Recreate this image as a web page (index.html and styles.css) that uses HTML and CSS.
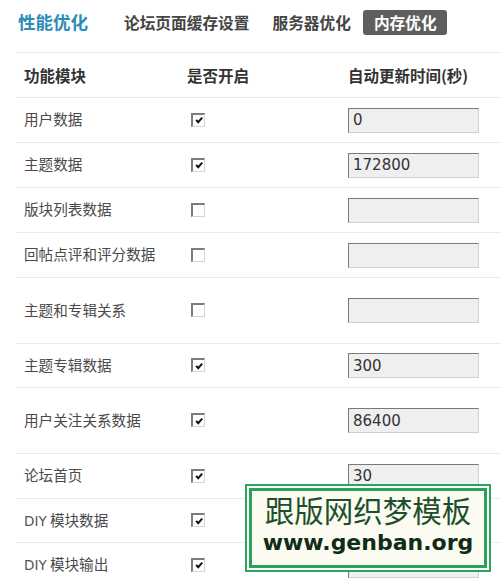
FILE: index.html
```html
<!DOCTYPE html>
<html lang="zh-CN">
<head>
<meta charset="utf-8">
<title>性能优化 - 内存优化</title>
<link rel="stylesheet" href="styles.css">
</head>
<body>
<div class="page">
  <div class="topbar">
    <h1 class="title">性能优化</h1>
    <ul class="tabs">
      <li class="tab">论坛页面缓存设置</li>
      <li class="tab">服务器优化</li>
      <li class="tab current">内存优化</li>
    </ul>
  </div>

  <div class="table">
    <div class="row head">
      <div class="cell">功能模块</div>
      <div class="cell">是否开启</div>
      <div class="cell">自动更新时间(秒)</div>
    </div>

    <div class="row">
      <div class="cell name">用户数据</div>
      <div class="cell"><span class="cb"><svg viewBox="0 0 10 10"><path d="M2.2 4.8 L4.2 7.2 L8.2 2.6"/></svg></span></div>
      <div class="cell"><span class="input">0</span></div>
    </div>
    <div class="row">
      <div class="cell name">主题数据</div>
      <div class="cell"><span class="cb"><svg viewBox="0 0 10 10"><path d="M2.2 4.8 L4.2 7.2 L8.2 2.6"/></svg></span></div>
      <div class="cell"><span class="input">172800</span></div>
    </div>
    <div class="row">
      <div class="cell name">版块列表数据</div>
      <div class="cell"><span class="cb"></span></div>
      <div class="cell"><span class="input"></span></div>
    </div>
    <div class="row">
      <div class="cell name">回帖点评和评分数据</div>
      <div class="cell"><span class="cb"></span></div>
      <div class="cell"><span class="input"></span></div>
    </div>
    <div class="row tall">
      <div class="cell name">主题和专辑关系</div>
      <div class="cell"><span class="cb"></span></div>
      <div class="cell"><span class="input"></span></div>
    </div>
    <div class="row short">
      <div class="cell name">主题专辑数据</div>
      <div class="cell"><span class="cb"><svg viewBox="0 0 10 10"><path d="M2.2 4.8 L4.2 7.2 L8.2 2.6"/></svg></span></div>
      <div class="cell"><span class="input">300</span></div>
    </div>
    <div class="row tall">
      <div class="cell name">用户关注关系数据</div>
      <div class="cell"><span class="cb"><svg viewBox="0 0 10 10"><path d="M2.2 4.8 L4.2 7.2 L8.2 2.6"/></svg></span></div>
      <div class="cell"><span class="input">86400</span></div>
    </div>
    <div class="row">
      <div class="cell name">论坛首页</div>
      <div class="cell"><span class="cb"><svg viewBox="0 0 10 10"><path d="M2.2 4.8 L4.2 7.2 L8.2 2.6"/></svg></span></div>
      <div class="cell"><span class="input">30</span></div>
    </div>
    <div class="row short">
      <div class="cell name"><span class="label"><span class="latin">DIY</span> 模块数据</span></div>
      <div class="cell"><span class="cb"><svg viewBox="0 0 10 10"><path d="M2.2 4.8 L4.2 7.2 L8.2 2.6"/></svg></span></div>
      <div class="cell"><span class="input"></span></div>
    </div>
    <div class="row">
      <div class="cell name"><span class="label"><span class="latin">DIY</span> 模块输出</span></div>
      <div class="cell"><span class="cb"><svg viewBox="0 0 10 10"><path d="M2.2 4.8 L4.2 7.2 L8.2 2.6"/></svg></span></div>
      <div class="cell"><span class="input"></span></div>
    </div>
  </div>

  <div class="watermark">
    <div class="wm-inner">
      <div class="wm-cn">跟版网织梦模板</div>
      <div class="wm-url">www.genban.org</div>
    </div>
  </div>
</div>
</body>
</html>
```

FILE: styles.css
```css
html, body {
  margin: 0;
  padding: 0;
  background: #ffffff;
}

body {
  font-family: "Noto Sans CJK SC", "Noto Sans", sans-serif;
  color: #4a4a4a;
  overflow: hidden;
}

.page {
  position: relative;
  width: 501px;
  height: 581px;
  overflow: hidden;
}

/* ---------- top bar ---------- */
.topbar {
  display: flex;
  align-items: flex-start;
  height: 42px;
  padding-top: 10px;
  padding-left: 18px;
}

.title {
  margin: -1px 25px 0 0;
  font-size: 17.5px;
  line-height: 25px;
  font-weight: bold;
  color: #2b8cb8;
  height: 25px;
}

.tabs {
  display: flex;
  gap: 2px;
  margin: 0;
  padding: 0;
  list-style: none;
}

.tab {
  padding: 0 10px 0 11px;
  font-size: 15.7px;
  line-height: 25px;
  height: 25px;
  font-weight: bold;
  color: #454545;
  border-radius: 3px;
}

.tab.current {
  background: #5e5e5e;
  color: #ffffff;
}

/* ---------- table ---------- */
.table {
  margin-left: 16px;
}

.row {
  display: grid;
  grid-template-columns: 163px 161px 1fr;
  align-items: center;
  height: 45px;
  box-sizing: border-box;
  border-top: 1px dotted #d9d9d9;
  padding-left: 8px;
  font-size: 14.6px;
}

.row.tall {
  height: 66px;
}

.row.short {
  height: 44px;
}

.row.head .cell {
  font-size: 15.5px;
  font-weight: bold;
  color: #333333;
}

.cell {
  display: flex;
  align-items: center;
  white-space: nowrap;
}

.name {
  padding-bottom: 3px;
}

.latin {
  font-family: "DejaVu Sans", sans-serif;
  font-size: 13.5px;
  color: #555555;
}

/* checkbox */
.cb {
  display: inline-flex;
  align-items: center;
  justify-content: center;
  width: 14px;
  height: 14px;
  margin-left: 4px;
  margin-top: -1px;
  box-sizing: border-box;
  background: #ffffff;
  border-top: 2px solid #7c7c7c;
  border-left: 2px solid #7c7c7c;
  border-right: 1px solid #d4d4d4;
  border-bottom: 1px solid #d4d4d4;
}

.cb svg {
  width: 10px;
  height: 10px;
  display: block;
}

.cb path {
  fill: none;
  stroke: #111111;
  stroke-width: 2;
}

/* text input */
.input {
  display: flex;
  align-items: center;
  width: 131px;
  height: 25px;
  box-sizing: border-box;
  padding-left: 4px;
  background: #efefef;
  border-top: 1px solid #7a7a7a;
  border-left: 1px solid #7a7a7a;
  border-right: 1px solid #cfcfcf;
  border-bottom: 1px solid #cfcfcf;
  font-family: "DejaVu Sans", sans-serif;
  font-size: 15px;
  color: #333333;
}

/* ---------- watermark overlay ---------- */
.watermark {
  position: absolute;
  left: 245px;
  top: 484px;
  width: 246px;
  height: 88px;
  box-sizing: border-box;
  padding: 4px;
  background: #27a55c;
}

.wm-inner {
  height: 100%;
  box-sizing: border-box;
  border: 3px solid #27a55c;
  box-shadow: 0 0 0 2px #ffffff;
  background: #fbfbf1;
  display: flex;
  flex-direction: column;
  align-items: center;
}

.wm-cn {
  font-size: 29.5px;
  line-height: normal;
  margin-top: -3.5px;
  color: #1d4f2c;
}

.wm-url {
  font-family: "DejaVu Sans", sans-serif;
  font-weight: bold;
  font-size: 22px;
  line-height: normal;
  color: #0f2c19;
}
```
